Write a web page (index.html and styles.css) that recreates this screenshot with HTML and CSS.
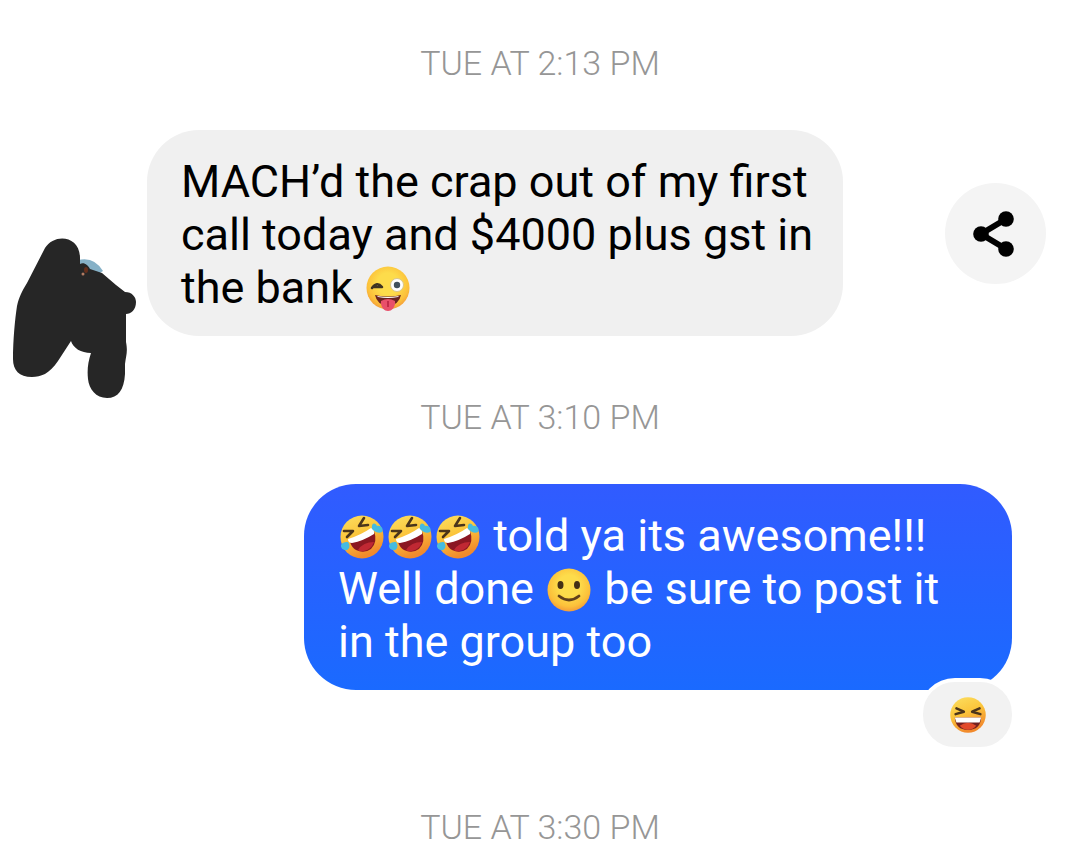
FILE: index.html
```html
<!DOCTYPE html>
<html lang="en">
<head>
<meta charset="utf-8">
<meta name="viewport" content="width=device-width, initial-scale=1">
<title>Conversation</title>
<link rel="stylesheet" href="styles.css">
</head>
<body>
<svg class="defs" aria-hidden="true">
  <defs>
    <radialGradient id="face" cx="50%" cy="40%" r="62%">
      <stop offset="0.4" stop-color="#fddc4b"/>
      <stop offset="0.78" stop-color="#fcc03a"/>
      <stop offset="1" stop-color="#f2963a"/>
    </radialGradient>
    <linearGradient id="warm" x1="0" y1="0" x2="0.4" y2="1">
      <stop offset="0" stop-color="#fce063"/>
      <stop offset="0.5" stop-color="#fbc63c"/>
      <stop offset="1" stop-color="#f28a2c"/>
    </linearGradient>
    <symbol id="wink" viewBox="0 0 48 46">
      <circle cx="24" cy="22" r="21.500" fill="url(#face)"/>
      <path d="M8 22Q13 15 18 21M10 21H17" fill="none" stroke="#3f3322" stroke-width="2.500" stroke-linecap="round"/>
      <circle cx="33" cy="19" r="6.500" fill="#fff" stroke="#d9c58c"/>
      <circle cx="33" cy="19" r="3.200" fill="#41515f"/>
      <path d="M11 29Q24 32 37 29Q35 39 24 40Q13 39 11 29Z" fill="#6b2420"/>
      <path d="M13 30Q24 32 35 30L34 31Q24 33 14 31Z" fill="#fff"/>
      <path d="M17 35Q24 31 31 35V38C30 42 28 45 24 45S18 42 17 38Z" fill="#e8506a"/>
      <path d="M24 35V41" stroke="#c22b49" stroke-width="2"/>
    </symbol>
    <symbol id="rofl" viewBox="0 0 48 46">
      <circle cx="24" cy="23" r="21.500" fill="url(#warm)"/>
      <path d="M6 17L15 17L9 23M26 4L21 12L30 11" fill="none" stroke="#4b351b" stroke-width="2.600" stroke-linecap="round" stroke-linejoin="round"/>
      <path d="M12 28L36 17Q40 28 33 35Q26 40 18 36Q14 34 12 28Z" fill="#8b1722"/>
      <path d="M20 36Q25 28 36 28Q33 36 26 37Q22 38 20 36Z" fill="#c02833"/>
      <path d="M10 25Q23 21 33 14Q37 16 36 20Q25 27 14 29Q10 29 10 25Z" fill="#fff"/>
      <path d="M34 15C33 9 37 8 39 12C43 11 46 15 44 18C41 20 37 18 34 15Z" fill="#46bbe0"/>
      <path d="M10 28C13 32 11 37 7 36C2 35 2 30 5 29C6 28 8 28 10 28Z" fill="#46bbe0"/>
    </symbol>
    <symbol id="smile" viewBox="0 0 48 46">
      <circle cx="24" cy="23" r="21.500" fill="url(#face)"/>
      <ellipse cx="15.500" cy="18" rx="3" ry="4" fill="#433016"/>
      <ellipse cx="32" cy="18" rx="3" ry="4" fill="#433016"/>
      <path d="M14 29Q24 37 34 29" fill="none" stroke="#60401c" stroke-width="2.800" stroke-linecap="round"/>
    </symbol>
    <symbol id="laugh" viewBox="0 0 48 46">
      <circle cx="24" cy="23" r="21.500" fill="url(#warm)"/>
      <path d="M10 15L19 19L9 22M38 15L29 19L39 22" fill="none" stroke="#4b351b" stroke-width="3" stroke-linecap="round" stroke-linejoin="round"/>
      <path d="M8 26H40Q39 41 24 41T8 26Z" fill="#74201f"/>
      <path d="M14 36Q24 29 34 36Q30 41 24 41T14 36Z" fill="#e24a2a"/>
      <path d="M8 26H40L38 32H10Z" fill="#fff"/>
    </symbol>
  </defs>
</svg>
<main class="chat">
  <time class="stamp">TUE AT 2:13 PM</time>
  <article class="row">
    <svg class="avatar" viewBox="0 0 124 160" role="img" aria-label="Sender">
      <path d="M66 22Q82 18 91 33L73 44Z" fill="#86b1c7"/>
      <path d="M33 10C42-5 68-3 68 20V26C72 24 76 27 78 31L90 35L104 47L113 54C120 54 124 59 124 64C124 72 119 76 114 76L114 104C116 114 114 118 113 126V136C112 152 106 160 95 160C84 160 77 151 76 141C75 132 76 124 79 115C69 115 61 110 59 103L46 123C37 136 29 139 20 139C7 139 1 132 1 121C1 102 3 81 5 68C7 59 10 53 15 45Z" fill="#262626"/>
      <ellipse cx="74" cy="32" rx="2" ry="3" fill="#642f1c"/>
      <circle cx="71" cy="36" r="1.500" fill="#b27b62"/>
    </svg>
    <p class="bubble bubble-in">MACH’d the crap out of my first call today and $4000 plus gst in the bank <svg class="emoji" role="img" aria-label="Winking face with tongue"><use href="#wink"/></svg></p>
    <button class="share" type="button" aria-label="Share">
      <svg class="share-icon" viewBox="0 0 42 46">
        <path d="M33 8L8 23L33 38" fill="none" stroke="#000" stroke-width="6"/>
        <circle cx="33" cy="8" r="7.800"/><circle cx="8" cy="23" r="7.800"/><circle cx="33" cy="38" r="7.800"/>
      </svg>
    </button>
  </article>
  <time class="stamp">TUE AT 3:10 PM</time>
  <article class="row-out">
    <p class="bubble bubble-out"><svg class="emoji" role="img" aria-label="Rolling on the floor laughing"><use href="#rofl"/></svg><svg class="emoji" role="img" aria-label="Rolling on the floor laughing"><use href="#rofl"/></svg><svg class="emoji" role="img" aria-label="Rolling on the floor laughing"><use href="#rofl"/></svg> told ya its awesome!!! Well done <svg class="emoji" role="img" aria-label="Smiling face"><use href="#smile"/></svg> be sure to post it in the group too</p>
    <button class="reaction" type="button" aria-label="Laughing reaction"><svg class="reaction-icon"><use href="#laugh"/></svg></button>
  </article>
  <time class="stamp">TUE AT 3:30 PM</time>
</main>
</body>
</html>
```
FILE: styles.css
```css
* {
  box-sizing: border-box;
}

body {
  margin: 0;
  background: #fff;
  font-family: Roboto, "Liberation Sans", sans-serif;
}

.defs {
  position: absolute;
  width: 0;
  height: 0;
}

.chat {
  display: flex;
  flex-direction: column;
  padding-top: 48px;
}

.stamp {
  color: #969696;
  font-size: 34px;
  font-weight: 300;
  line-height: 30px;
  text-align: center;
}

.row {
  display: flex;
  align-items: flex-start;
  gap: 11px;
  margin-top: 52px;
  margin-bottom: 4px;
  padding: 0 34px 0 12px;
}

.avatar {
  flex: none;
  width: 124px;
  height: 160px;
  margin-top: 108px;
}

.bubble {
  margin: 0;
  padding: 25px 34px 22px;
  border-radius: 52px;
  font-size: 45px;
  line-height: 53px;
}

.bubble-in {
  flex: 0 1 696px;
  padding-right: 24px;
  background: #f0f0f0;
  color: #000;
}

.bubble-out {
  max-width: 708px;
  background: linear-gradient(#315bff, #1a6aff);
  color: #fff;
}

.emoji {
  width: 48px;
  height: 46px;
  vertical-align: -9px;
}

.share {
  display: flex;
  flex: none;
  align-items: center;
  justify-content: center;
  width: 101px;
  height: 101px;
  margin-top: 53px;
  margin-left: auto;
  padding: 0 4px 0 0;
  border: 0;
  border-radius: 50%;
  background: #f4f4f4;
}

.share-icon {
  width: 42px;
  height: 46px;
}

.row-out {
  position: relative;
  display: flex;
  justify-content: flex-end;
  margin-top: 52px;
  margin-bottom: 122px;
  padding: 0 68px;
}

.reaction {
  position: absolute;
  right: 64px;
  bottom: -61px;
  display: flex;
  align-items: center;
  justify-content: center;
  width: 97px;
  height: 73px;
  padding: 0;
  border: 4px solid #fff;
  border-radius: 36px;
  background: #f2f2f2;
}

.reaction-icon {
  width: 40px;
  height: 38px;
}
```
